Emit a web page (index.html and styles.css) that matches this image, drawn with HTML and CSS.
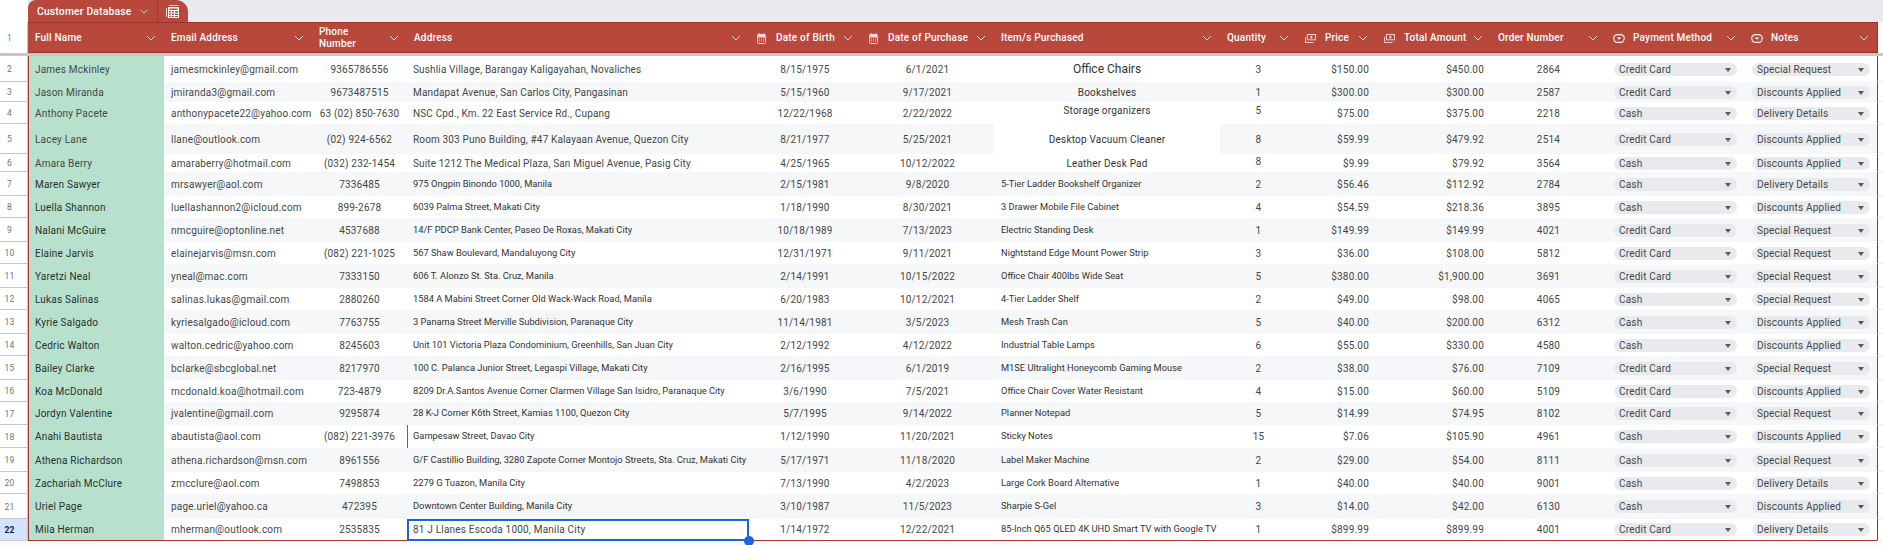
FILE: index.html
```html
<!DOCTYPE html>
<html lang="en">
<head>
    <meta charset="UTF-8">
    <title>Customer Database</title>
    <link rel="stylesheet" href="styles.css">
</head>
<body>
<svg class="defs" width="0" height="0">
    <symbol id="chev" viewBox="0 0 10 6"><path d="M1 1l4 4 4-4" fill="none" stroke="currentColor"/></symbol>
    <symbol id="cal" viewBox="0 0 9 11"><path d="M2 0v2M7 0v2" stroke="currentColor"/><rect x=".5" y="1.5" width="8" height="9" rx="1" fill="none" stroke="currentColor"/><rect x="1" y="2" width="7" height="2.5" fill="currentColor"/><path d="M2 6h1M4 6h1M6 6h1M2 8h1M4 8h1M6 8h1" stroke="currentColor"/></symbol>
    <symbol id="cash" viewBox="0 0 12 10"><rect x="2.5" y=".5" width="9" height="6" fill="none" stroke="currentColor"/><path d="M.5 3v6.500h9" fill="none" stroke="currentColor"/><rect x="6" y="2" width="2" height="3" fill="currentColor"/></symbol>
    <symbol id="drop" viewBox="0 0 13 10"><rect x=".7" y=".7" width="11.600" height="8.600" rx="4" fill="none" stroke="currentColor" stroke-width="1.200"/><path d="M4 4h5L6.500 6.500z" fill="currentColor"/></symbol>
</svg>
<div class="tabbar">
    <div class="corner"></div>
    <div class="tab">
        <span class="tabname">Customer Database</span>
        <svg class="tabchev"><use href="#chev"/></svg>
        <span class="tabdiv"></span>
        <svg class="tabicon" viewBox="0 0 13 13"><path d="M3 .5h9.500M.5 3v9" fill="none" stroke="#f3d6d2"/><rect x="2.500" y="2.500" width="10" height="10" fill="none" stroke="#fff"/><path d="M3 3h9v2.500H3zM5.500 5.500v7M8.500 5.500v7M3 8h9.500M3 10.500h9.500" fill="none" stroke="#fff"/></svg>
    </div>
</div>
<table class="sheet">
    <colgroup>
        <col class="c-num"><col class="c-name"><col class="c-email"><col class="c-phone"><col class="c-addr"><col class="c-dob"><col class="c-buy"><col class="c-item"><col class="c-qty"><col class="c-price"><col class="c-total"><col class="c-order"><col class="c-pay"><col class="c-notes"><col class="c-rest">
    </colgroup>
    <thead>
    <tr class="head">
        <th class="num">1</th>
        <th><div class="hd"><span>Full Name</span><svg class="chev"><use href="#chev"/></svg></div></th>
        <th><div class="hd"><span>Email Address</span><svg class="chev"><use href="#chev"/></svg></div></th>
        <th><div class="hd"><span class="wrap">Phone Number</span><svg class="chev"><use href="#chev"/></svg></div></th>
        <th><div class="hd"><span>Address</span><svg class="chev"><use href="#chev"/></svg></div></th>
        <th><div class="hd"><svg class="ic-cal"><use href="#cal"/></svg><span>Date of Birth</span><svg class="chev"><use href="#chev"/></svg></div></th>
        <th><div class="hd"><svg class="ic-cal"><use href="#cal"/></svg><span>Date of Purchase</span><svg class="chev"><use href="#chev"/></svg></div></th>
        <th><div class="hd"><span>Item/s Purchased</span><svg class="chev"><use href="#chev"/></svg></div></th>
        <th><div class="hd"><span>Quantity</span><svg class="chev"><use href="#chev"/></svg></div></th>
        <th><div class="hd"><svg class="ic-cash"><use href="#cash"/></svg><span>Price</span><svg class="chev"><use href="#chev"/></svg></div></th>
        <th><div class="hd"><svg class="ic-cash"><use href="#cash"/></svg><span>Total Amount</span><svg class="chev"><use href="#chev"/></svg></div></th>
        <th><div class="hd"><span>Order Number</span><svg class="chev"><use href="#chev"/></svg></div></th>
        <th><div class="hd"><svg class="ic-drop"><use href="#drop"/></svg><span>Payment Method</span><svg class="chev"><use href="#chev"/></svg></div></th>
        <th><div class="hd"><svg class="ic-drop"><use href="#drop"/></svg><span>Notes</span><svg class="chev"><use href="#chev"/></svg></div></th>
        <th class="rest"></th>
    </tr>
    <tr class="freeze"><td colspan="15"></td></tr>
    </thead>
    <tbody>
    <tr class="h26"><td>2</td><td>James Mckinley</td><td>jamesmckinley@gmail.com</td><td>9365786556</td><td>Sushlia Village, Barangay Kaligayahan, Novaliches</td><td>8/15/1975</td><td>6/1/2021</td><td class="big">Office Chairs</td><td>3</td><td>$150.00</td><td>$450.00</td><td>2864</td><td><span class="pill">Credit Card<i></i></span></td><td><span class="pill">Special Request<i></i></span></td><td></td></tr>
    <tr class="h20"><td>3</td><td>Jason Miranda</td><td>jmiranda3@gmail.com</td><td>9673487515</td><td>Mandapat Avenue, San Carlos City, Pangasinan</td><td>5/15/1960</td><td>9/17/2021</td><td class="mid">Bookshelves</td><td>1</td><td>$300.00</td><td>$300.00</td><td>2587</td><td><span class="pill">Credit Card<i></i></span></td><td><span class="pill">Discounts Applied<i></i></span></td><td></td></tr>
    <tr class="h22"><td>4</td><td>Anthony Pacete</td><td>anthonypacete22@yahoo.com</td><td>63 (02) 850-7630</td><td>NSC Cpd., Km. 22 East Service Rd., Cupang</td><td>12/22/1968</td><td>2/22/2022</td><td class="mid up">Storage organizers</td><td class="up">5</td><td>$75.00</td><td>$375.00</td><td>2218</td><td><span class="pill">Cash<i></i></span></td><td><span class="pill">Delivery Details<i></i></span></td><td></td></tr>
    <tr class="h30"><td>5</td><td>Lacey Lane</td><td>llane@outlook.com</td><td>(02) 924-6562</td><td>Room 303 Puno Building, #47 Kalayaan Avenue, Quezon City</td><td>8/21/1977</td><td>5/25/2021</td><td class="mid blank">Desktop Vacuum Cleaner</td><td>8</td><td>$59.99</td><td>$479.92</td><td>2514</td><td><span class="pill">Credit Card<i></i></span></td><td><span class="pill">Discounts Applied<i></i></span></td><td></td></tr>
    <tr class="h18"><td>6</td><td>Amara Berry</td><td>amaraberry@hotmail.com</td><td>(032) 232-1454</td><td>Suite 1212 The Medical Plaza, San Miguel Avenue, Pasig City</td><td>4/25/1965</td><td>10/12/2022</td><td class="mid">Leather Desk Pad</td><td class="up1">8</td><td>$9.99</td><td>$79.92</td><td>3564</td><td><span class="pill">Cash<i></i></span></td><td><span class="pill">Discounts Applied<i></i></span></td><td></td></tr>
    <tr class="h24 sm"><td>7</td><td>Maren Sawyer</td><td>mrsawyer@aol.com</td><td>7336485</td><td>975 Ongpin Binondo 1000, Manila</td><td>2/15/1981</td><td>9/8/2020</td><td>5-Tier Ladder Bookshelf Organizer</td><td>2</td><td>$56.46</td><td>$112.92</td><td>2784</td><td><span class="pill">Cash<i></i></span></td><td><span class="pill">Delivery Details<i></i></span></td><td></td></tr>
    <tr class="h22 sm"><td>8</td><td>Luella Shannon</td><td>luellashannon2@icloud.com</td><td>899-2678</td><td>6039 Palma Street, Makati City</td><td>1/18/1990</td><td>8/30/2021</td><td>3 Drawer Mobile File Cabinet</td><td>4</td><td>$54.59</td><td>$218.36</td><td>3895</td><td><span class="pill">Cash<i></i></span></td><td><span class="pill">Discounts Applied<i></i></span></td><td></td></tr>
    <tr class="h24 sm"><td>9</td><td>Nalani McGuire</td><td>nmcguire@optonline.net</td><td>4537688</td><td>14/F PDCP Bank Center, Paseo De Roxas, Makati City</td><td>10/18/1989</td><td>7/13/2023</td><td>Electric Standing Desk</td><td>1</td><td>$149.99</td><td>$149.99</td><td>4021</td><td><span class="pill">Credit Card<i></i></span></td><td><span class="pill">Special Request<i></i></span></td><td></td></tr>
    <tr class="h22 sm"><td>10</td><td>Elaine Jarvis</td><td>elainejarvis@msn.com</td><td>(082) 221-1025</td><td>567 Shaw Boulevard, Mandaluyong City</td><td>12/31/1971</td><td>9/11/2021</td><td>Nightstand Edge Mount Power Strip</td><td>3</td><td>$36.00</td><td>$108.00</td><td>5812</td><td><span class="pill">Credit Card<i></i></span></td><td><span class="pill">Special Request<i></i></span></td><td></td></tr>
    <tr class="h24 sm"><td>11</td><td>Yaretzi Neal</td><td>yneal@mac.com</td><td>7333150</td><td>606 T. Alonzo St. Sta. Cruz, Manila</td><td>2/14/1991</td><td>10/15/2022</td><td>Office Chair 400lbs Wide Seat</td><td>5</td><td>$380.00</td><td>$1,900.00</td><td>3691</td><td><span class="pill">Credit Card<i></i></span></td><td><span class="pill">Special Request<i></i></span></td><td></td></tr>
    <tr class="h22 sm"><td>12</td><td>Lukas Salinas</td><td>salinas.lukas@gmail.com</td><td>2880260</td><td>1584 A Mabini Street Corner Old Wack-Wack Road, Manila</td><td>6/20/1983</td><td>10/12/2021</td><td>4-Tier Ladder Shelf</td><td>2</td><td>$49.00</td><td>$98.00</td><td>4065</td><td><span class="pill">Cash<i></i></span></td><td><span class="pill">Special Request<i></i></span></td><td></td></tr>
    <tr class="h24 sm"><td>13</td><td>Kyrie Salgado</td><td>kyriesalgado@icloud.com</td><td>7763755</td><td>3 Panama Street Merville Subdivision, Paranaque City</td><td>11/14/1981</td><td>3/5/2023</td><td>Mesh Trash Can</td><td>5</td><td>$40.00</td><td>$200.00</td><td>6312</td><td><span class="pill">Cash<i></i></span></td><td><span class="pill">Discounts Applied<i></i></span></td><td></td></tr>
    <tr class="h22 sm"><td>14</td><td>Cedric Walton</td><td>walton.cedric@yahoo.com</td><td>8245603</td><td>Unit 101 Victoria Plaza Condominium, Greenhills, San Juan City</td><td>2/12/1992</td><td>4/12/2022</td><td>Industrial Table Lamps</td><td>6</td><td>$55.00</td><td>$330.00</td><td>4580</td><td><span class="pill">Cash<i></i></span></td><td><span class="pill">Discounts Applied<i></i></span></td><td></td></tr>
    <tr class="h24 sm"><td>15</td><td>Bailey Clarke</td><td>bclarke@sbcglobal.net</td><td>8217970</td><td>100 C. Palanca Junior Street, Legaspi Village, Makati City</td><td>2/16/1995</td><td>6/1/2019</td><td>M1SE Ultralight Honeycomb Gaming Mouse</td><td>2</td><td>$38.00</td><td>$76.00</td><td>7109</td><td><span class="pill">Credit Card<i></i></span></td><td><span class="pill">Special Request<i></i></span></td><td></td></tr>
    <tr class="h22 sm"><td>16</td><td>Koa McDonald</td><td>mcdonald.koa@hotmail.com</td><td>723-4879</td><td>8209 Dr.A.Santos Avenue Corner Clarmen Village San Isidro, Paranaque City</td><td>3/6/1990</td><td>7/5/2021</td><td>Office Chair Cover Water Resistant</td><td>4</td><td>$15.00</td><td>$60.00</td><td>5109</td><td><span class="pill">Credit Card<i></i></span></td><td><span class="pill">Discounts Applied<i></i></span></td><td></td></tr>
    <tr class="h23 sm"><td>17</td><td>Jordyn Valentine</td><td>jvalentine@gmail.com</td><td>9295874</td><td>28 K-J Corner K6th Street, Kamias 1100, Quezon City</td><td>5/7/1995</td><td>9/14/2022</td><td>Planner Notepad</td><td>5</td><td>$14.99</td><td>$74.95</td><td>8102</td><td><span class="pill">Credit Card<i></i></span></td><td><span class="pill">Special Request<i></i></span></td><td></td></tr>
    <tr class="h23 sm"><td>18</td><td>Anahi Bautista</td><td>abautista@aol.com</td><td>(082) 221-3976</td><td class="cursor">Gampesaw Street, Davao City</td><td>1/12/1990</td><td>11/20/2021</td><td>Sticky Notes</td><td>15</td><td>$7.06</td><td>$105.90</td><td>4961</td><td><span class="pill">Cash<i></i></span></td><td><span class="pill">Discounts Applied<i></i></span></td><td></td></tr>
    <tr class="h24 sm"><td>19</td><td>Athena Richardson</td><td>athena.richardson@msn.com</td><td>8961556</td><td>G/F Castillio Building, 3280 Zapote Corner Montojo Streets, Sta. Cruz, Makati City</td><td>5/17/1971</td><td>11/18/2020</td><td>Label Maker Machine</td><td>2</td><td>$29.00</td><td>$54.00</td><td>8111</td><td><span class="pill">Cash<i></i></span></td><td><span class="pill">Special Request<i></i></span></td><td></td></tr>
    <tr class="h22 sm"><td>20</td><td>Zachariah McClure</td><td>zmcclure@aol.com</td><td>7498853</td><td>2279 G Tuazon, Manila City</td><td>7/13/1990</td><td>4/2/2023</td><td>Large Cork Board Alternative</td><td>1</td><td>$40.00</td><td>$40.00</td><td>9001</td><td><span class="pill">Cash<i></i></span></td><td><span class="pill">Delivery Details<i></i></span></td><td></td></tr>
    <tr class="h25 sm"><td>21</td><td>Uriel Page</td><td>page.uriel@yahoo.ca</td><td>472395</td><td>Downtown Center Building, Manila City</td><td>3/10/1987</td><td>11/5/2023</td><td>Sharpie S-Gel</td><td>3</td><td>$14.00</td><td>$42.00</td><td>6130</td><td><span class="pill">Cash<i></i></span></td><td><span class="pill">Discounts Applied<i></i></span></td><td></td></tr>
    <tr class="h22 sm last"><td>22</td><td>Mila Herman</td><td>mherman@outlook.com</td><td>2535835</td><td class="selected">81 J Llanes Escoda 1000, Manila City</td><td>1/14/1972</td><td>12/22/2021</td><td>85-Inch Q65 QLED 4K UHD Smart TV with Google TV</td><td>1</td><td>$899.99</td><td>$899.99</td><td>4001</td><td><span class="pill">Credit Card<i></i></span></td><td><span class="pill">Delivery Details<i></i></span></td><td></td></tr>
    </tbody>
</table>
<span class="handle"></span>
</body>
</html>
```

FILE: styles.css
```css
body {
    position: relative;
    height: 545px;
    margin: 0;
    background: #f8f9fa;
    font-family: Roboto, sans-serif;
    font-size: 10px;
    letter-spacing: .2px;
    color: #444746;
    overflow: hidden;
}

.defs {
    display: block;
    height: 0;
}

.tabbar {
    display: flex;
    height: 22px;
    background: #e8eaed;
}
.corner {
    width: 28px;
    background: #fff;
}
.tab {
    display: flex;
    align-items: center;
    width: 160px;
    background: #b8473c;
    border-radius: 8px 12px 0 0;
    color: #fff;
}
.tabname {
    margin-left: 9px;
    width: 103px;
    font-weight: 500;
    font-size: 10.300px;
}
.tabchev {
    width: 8px;
    height: 5px;
}
.tabdiv {
    width: 1px;
    height: 22px;
    margin-left: 9px;
    background: #a53a30;
}
.tabicon {
    width: 13px;
    height: 13px;
    margin-left: 8px;
}

.sheet {
    width: 1883px;
    border-collapse: separate;
    border-spacing: 0;
    table-layout: fixed;
    background: #fff;
}
.c-num { width: 28px; }
.c-name { width: 136px; }
.c-email { width: 148px; }
.c-phone { width: 95px; }
.c-addr { width: 342px; }
.c-dob { width: 112px; }
.c-buy { width: 133px; }
.c-item { width: 226px; }
.c-qty { width: 77px; }
.c-price { width: 79px; }
.c-total { width: 115px; }
.c-order { width: 115px; }
.c-pay { width: 138px; }
.c-notes { width: 133px; }
.c-rest { width: 6px; }

/* header */
.head th {
    height: 28px;
    padding: 1px 0 0;
    box-sizing: content-box;
    background: #b8473c;
    border-top: 1px solid #9b3228;
    border-bottom: 1px solid #9b3228;
    color: #fff;
    font-weight: 500;
    font-size: 10px;
    text-align: left;
}
.head th.num {
    background: #fff;
    border-top: 0;
    border-bottom: 0;
    border-right: 1px solid #c7c7c7;
    padding: 1px 8px 0 0;
    color: #70757a;
    font-size: 8.500px;
    font-weight: 400;
    text-align: center;
}
.head th.rest {
    background: #fff;
    border: 0;
    border-left: 1px solid #9b3228;
}
.hd {
    display: flex;
    align-items: center;
    padding: 0 8px 0 7px;
    line-height: 12px;
}
.wrap {
    width: 40px;
}
.chev {
    width: 10px;
    height: 6px;
    margin-left: auto;
    opacity: .85;
}
.ic-cal {
    width: 9px;
    height: 11px;
    margin: 0 10px 0 1px;
    opacity: .8;
}
.ic-cash {
    width: 11px;
    height: 9px;
    margin: 0 9px 0 1px;
    opacity: .85;
}
.ic-drop {
    width: 12px;
    height: 9px;
    margin: 0 8px 0 0;
}

.freeze td {
    height: 3px;
    padding: 0;
    background: #c7c7c7;
}

/* rows */
.h18 td { height: 18px; }
.h20 td { height: 20px; }
.h22 td { height: 22px; }
.h23 td { height: 23px; }
.h24 td { height: 24px; }
.h25 td { height: 25px; }
.h26 td { height: 26px; }
.h30 td { height: 30px; }

tbody td {
    padding: 1px 7px 0;
    line-height: 12px;
    white-space: nowrap;
    overflow: hidden;
    box-sizing: border-box;
}
tbody tr:nth-child(even) td {
    background: #f6f7f9;
}

/* row number */
tbody td:nth-child(1),
tbody tr:nth-child(even) td:nth-child(1) {
    padding: 1px 8px 0 0;
    background: #fff;
    border-right: 1px solid #c7c7c7;
    border-bottom: 1px solid #c7c7c7;
    color: #70757a;
    font-size: 8.500px;
    text-align: center;
}
tbody tr.last td:nth-child(1) {
    background: #d3e3fd;
    color: #041e49;
    font-weight: 700;
}

/* name */
tbody td:nth-child(2),
tbody tr:nth-child(even) td:nth-child(2) {
    padding-left: 6px;
    background: #b7e1cd;
    border-left: 1px solid #a5372d;
}
.sm td:nth-child(2) {
    color: #2b2f2e;
}

tbody td:nth-child(4),
tbody td:nth-child(6),
tbody td:nth-child(7),
tbody td:nth-child(9),
tbody td:nth-child(12) {
    text-align: center;
}
tbody td:nth-child(10),
tbody td:nth-child(11) {
    text-align: right;
}
tbody td:nth-child(5) {
    padding-left: 6px;
    padding-right: 0;
    letter-spacing: .15px;
}

/* smaller text further down the sheet */
.sm td:nth-child(5),
.sm td:nth-child(8) {
    padding-top: 0;
    padding-right: 0;
    padding-bottom: 1px;
    font-size: 9.300px;
    letter-spacing: 0;
    color: #333;
}
.sm td.selected {
    padding-top: 1px;
    padding-bottom: 0;
    font-size: 10px;
    letter-spacing: .2px;
    color: #444746;
}

/* item column, first rows */
tbody td.big,
tbody td.mid {
    text-align: center;
    color: #333;
}
tbody td.big {
    padding-top: 0;
    font-size: 12px;
    letter-spacing: 0;
}
tbody td.mid {
    font-size: 10px;
}
tbody tr:nth-child(even) td.blank {
    background: #fff;
}
tbody td.up {
    padding-top: 0;
    padding-bottom: 4px;
}
tbody td.up1 {
    padding-top: 0;
    padding-bottom: 2px;
}

/* dropdown chips */
tbody td:nth-child(13),
tbody td:nth-child(14) {
    padding: 0 7px 0 8px;
}
tbody td:nth-child(15) {
    padding: 0;
    background: #fff !important;
    border-left: 1px solid #9b3228;
    border-bottom: 1px solid #eee;
}
.pill {
    display: flex;
    align-items: center;
    justify-content: space-between;
    height: 13px;
    padding: 1px 6px 0 5px;
    box-sizing: border-box;
    border-radius: 7px;
    background: #e8eaed;
}
.pill i {
    border-left: 3.500px solid transparent;
    border-right: 3.500px solid transparent;
    border-top: 4px solid #575a5c;
}

.cursor {
    box-shadow: inset 1px 0 0 #1a73e8;
}
.selected {
    outline: 2px solid #1a66d6;
    outline-offset: -2px;
}
.handle {
    position: absolute;
    left: 744px;
    top: 536px;
    width: 10px;
    height: 10px;
    border-radius: 50%;
    background: #1a66d6;
}

.last td {
    border-bottom: 1px solid #a5372d;
}
```
